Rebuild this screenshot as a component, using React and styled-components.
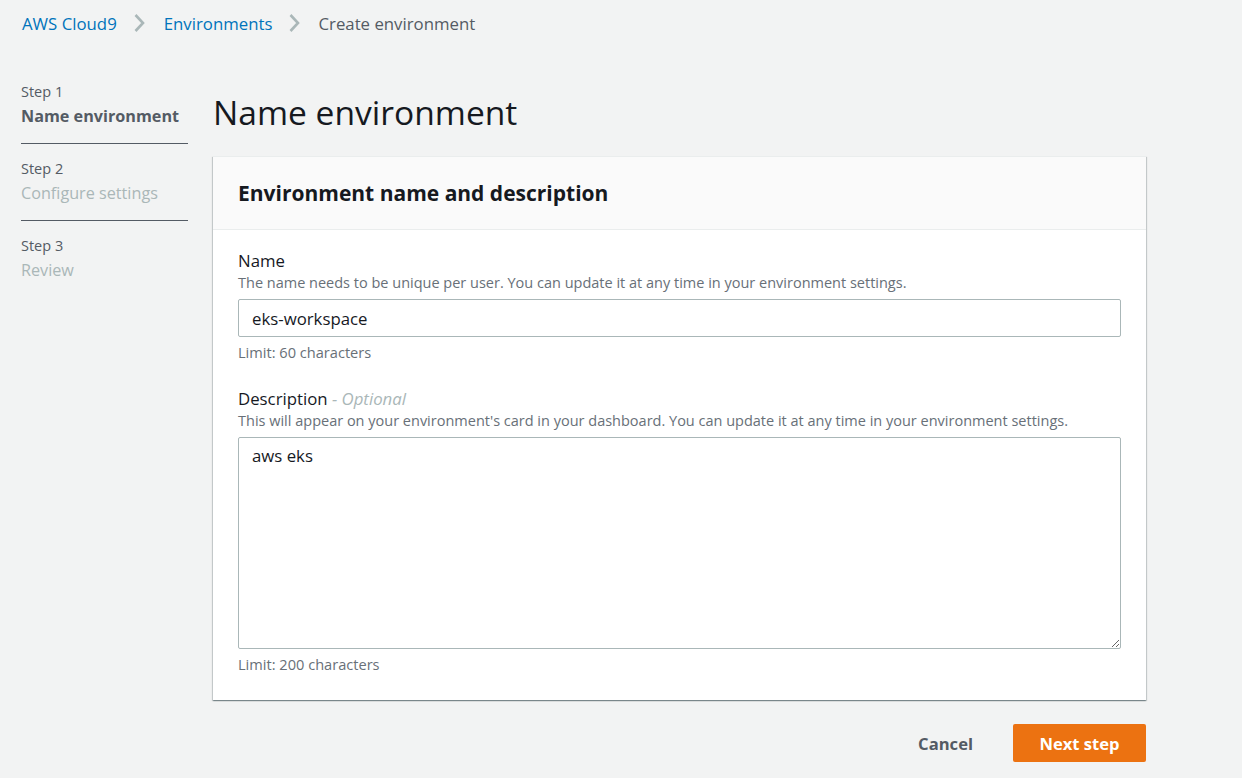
import React from 'react';
import styled, { createGlobalStyle } from 'styled-components';

const font = `"Open Sans", "Noto Sans", "Liberation Sans", sans-serif`;

const GlobalStyle = createGlobalStyle`
  html, body {
    margin: 0;
    padding: 0;
    background: #f2f3f3;
    font-family: ${font};
    color: #16191f;
  }
  * { box-sizing: border-box; }
`;

const steps = [
  { step: 'Step 1', title: 'Name environment', active: true },
  { step: 'Step 2', title: 'Configure settings' },
  { step: 'Step 3', title: 'Review' },
];

const App = () => {
  return (
    <Page>
      <GlobalStyle />
      <Breadcrumbs>
        <Crumb href="#">AWS Cloud9</Crumb>
        <Chevron />
        <Crumb href="#">Environments</Crumb>
        <Chevron />
        <Current>Create environment</Current>
      </Breadcrumbs>
      <Layout>
        <StepList>
          {steps.map((s, i) => (
            <StepItem key={s.step} last={i === steps.length - 1}>
              <StepLabel>{s.step}</StepLabel>
              <StepTitle active={s.active}>{s.title}</StepTitle>
            </StepItem>
          ))}
        </StepList>
        <Main>
          <Heading>Name environment</Heading>
          <Card>
            <CardHeader>
              <CardTitle>Environment name and description</CardTitle>
            </CardHeader>
            <CardBody>
              <Field>
                <Label>Name</Label>
                <Hint>
                  The name needs to be unique per user. You can update it at any time in your
                  environment settings.
                </Hint>
                <Input defaultValue="eks-workspace" />
                <Constraint>Limit: 60 characters</Constraint>
              </Field>
              <Field>
                <Label>
                  Description <Optional>- Optional</Optional>
                </Label>
                <Hint>
                  This will appear on your environment's card in your dashboard. You can update it
                  at any time in your environment settings.
                </Hint>
                <TextArea defaultValue="aws eks" />
                <Constraint>Limit: 200 characters</Constraint>
              </Field>
            </CardBody>
          </Card>
          <Actions>
            <LinkButton>Cancel</LinkButton>
            <PrimaryButton>Next step</PrimaryButton>
          </Actions>
        </Main>
      </Layout>
    </Page>
  );
};

const Chevron = () => (
  <ChevronWrap>
    <svg width="11" height="18" viewBox="0 0 11 18">
      <path d="M1.5 1 L9 9 L1.5 17" fill="none" stroke="#aab7b8" strokeWidth="2.6" />
    </svg>
  </ChevronWrap>
);

const Page = styled.div`
  min-height: 778px;
  padding: 11px 21px 16px;
`;

const Breadcrumbs = styled.nav`
  display: flex;
  align-items: center;
  height: 24px;
  font-size: 16.8px;
`;

const Crumb = styled.a`
  color: #0073bb;
  text-decoration: none;
  padding-left: 1px;
`;

const Current = styled.span`
  color: #545b64;
`;

const ChevronWrap = styled.span`
  display: flex;
  align-items: center;
  margin: 0 18px 0 17px;
`;

const Layout = styled.div`
  display: flex;
  gap: 25px;
  margin-top: 46px;
`;

const StepList = styled.ol`
  list-style: none;
  margin: 0;
  padding: 0;
  width: 167px;
  flex-shrink: 0;
`;

const StepItem = styled.li`
  padding: 0 0 ${(p) => (p.last ? '0' : '14px')};
  margin-bottom: 14px;
  border-bottom: ${(p) => (p.last ? 'none' : '1px solid #545b64')};
`;

const StepLabel = styled.div`
  font-size: 14.5px;
  line-height: 22px;
  color: #545b64;
`;

const StepTitle = styled.div`
  font-size: 16.2px;
  line-height: 26px;
  font-weight: ${(p) => (p.active ? 700 : 400)};
  color: ${(p) => (p.active ? '#545b64' : '#aab7b8')};
`;

const Main = styled.main`
  width: 933px;
`;

const Heading = styled.h1`
  margin: 0;
  font-size: 33.6px;
  line-height: 44px;
  font-weight: 400;
  color: #16191f;
  padding-top: 9px;
  margin-bottom: 22px;
`;

const Card = styled.section`
  background: #fff;
  box-shadow: 0 1px 1px 0 rgba(0, 28, 36, 0.3), 1px 1px 1px 0 rgba(0, 28, 36, 0.15),
    -1px 1px 1px 0 rgba(0, 28, 36, 0.15);
  border-top: 1px solid #eaeded;
`;

const CardHeader = styled.header`
  background: #fafafa;
  border-bottom: 1px solid #eaeded;
  padding: 0 25px;
  height: 73px;
  display: flex;
  align-items: center;
`;

const CardTitle = styled.h2`
  margin: 0;
  font-size: 21px;
  font-weight: 700;
  color: #16191f;
`;

const CardBody = styled.div`
  padding: 20px 25px 25px;
  display: flex;
  flex-direction: column;
  gap: 25px;
`;

const Field = styled.div`
  display: flex;
  flex-direction: column;
`;

const Label = styled.label`
  font-size: 16.8px;
  line-height: 22px;
  color: #16191f;
`;

const Optional = styled.i`
  color: #aab7b8;
`;

const Hint = styled.div`
  font-size: 14.5px;
  line-height: 22px;
  color: #687078;
  margin-bottom: 5px;
`;

const controlStyles = `
  width: 100%;
  border: 1px solid #aab7b8;
  border-radius: 2px;
  font-family: ${font};
  font-size: 16.8px;
  color: #16191f;
  padding: 0 13px;
  outline: none;
  background: #fff;
`;

const Input = styled.input`
  ${controlStyles}
  height: 38px;
`;

const TextArea = styled.textarea`
  ${controlStyles}
  height: 212px;
  padding-top: 6px;
  line-height: 24px;
  resize: vertical;
  display: block;
`;

const Constraint = styled.div`
  font-size: 14.6px;
  line-height: 22px;
  color: #687078;
  margin-top: 4px;
`;

const Actions = styled.div`
  display: flex;
  justify-content: flex-end;
  align-items: center;
  gap: 40px;
  margin-top: 24px;
`;

const LinkButton = styled.button`
  border: none;
  background: none;
  font-family: ${font};
  font-size: 16.6px;
  font-weight: 700;
  color: #545b64;
  padding: 0;
  cursor: pointer;
`;

const PrimaryButton = styled.button`
  border: none;
  border-radius: 2px;
  background: #ec7211;
  color: #fff;
  font-family: ${font};
  font-size: 16.6px;
  font-weight: 700;
  height: 38px;
  width: 133px;
  cursor: pointer;
`;

export default App;
